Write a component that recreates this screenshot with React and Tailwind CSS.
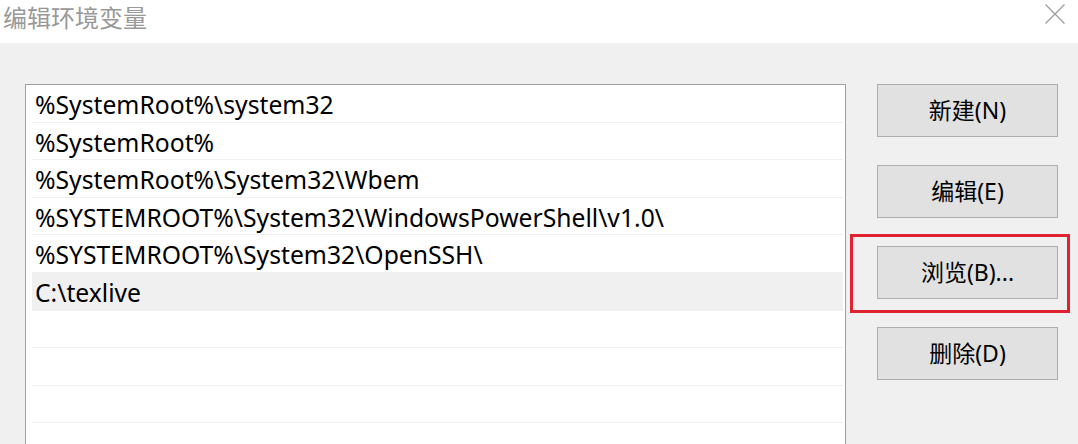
const rows = [
  '%SystemRoot%\\system32',
  '%SystemRoot%',
  '%SystemRoot%\\System32\\Wbem',
  '%SYSTEMROOT%\\System32\\WindowsPowerShell\\v1.0\\',
  '%SYSTEMROOT%\\System32\\OpenSSH\\',
  'C:\\texlive',
  '',
  '',
  '',
]

const buttons = ['新建(N)', '编辑(E)', '浏览(B)...', '删除(D)']

export default function App() {
  return (
    <div className="w-[1078px] h-[444px] overflow-hidden bg-[#f0f0f0] relative" style={{ fontFamily: '"Noto Sans", "Noto Sans CJK SC", sans-serif' }}>
      {/* title bar */}
      <div className="h-[43px] bg-white flex items-start justify-between">
        <div className="pl-[3px] pt-[1px] text-[24px] leading-[32px] text-[#999999]" style={{ fontFamily: '"Noto Sans CJK SC", sans-serif' }}>编辑环境变量</div>
        <svg className="mt-[4px] mr-[13px]" width="20" height="20" viewBox="0 0 20 20">
          <path d="M0.5 0.5L19.5 19.5M19.5 0.5L0.5 19.5" stroke="#9c9c9c" strokeWidth="1.2" fill="none" />
        </svg>
      </div>

      <div className="flex pt-[41px] pl-[25px]">
        {/* list */}
        <div className="w-[821px] h-[400px] bg-white border border-[#a0a0a0] border-b-0 pl-[6px] pr-[2px]">
          {rows.map((r, i) => (
            <div key={i} className={`h-[37.6px] border-b border-[#f0f0f0] pl-[3px] pt-[4px] flex items-center text-[24.7px] leading-none text-black whitespace-nowrap ${i === 5 ? 'bg-[#f0f0f0]' : ''}`}>
              {r}
            </div>
          ))}
        </div>

        {/* buttons */}
        <div className="flex flex-col gap-[28px] pl-[31px]">
          {buttons.map((b) => (
            <div key={b} className="w-[181px] h-[53px] bg-[#e1e1e1] border border-[#adadad] flex items-center justify-center text-[23px] text-black">
              {b}
            </div>
          ))}
        </div>
      </div>

      {/* highlight annotation */}
      <div className="absolute left-[850px] top-[234px] w-[220px] h-[79px] border-[3px] border-[#e0212f]" />
    </div>
  )
}
